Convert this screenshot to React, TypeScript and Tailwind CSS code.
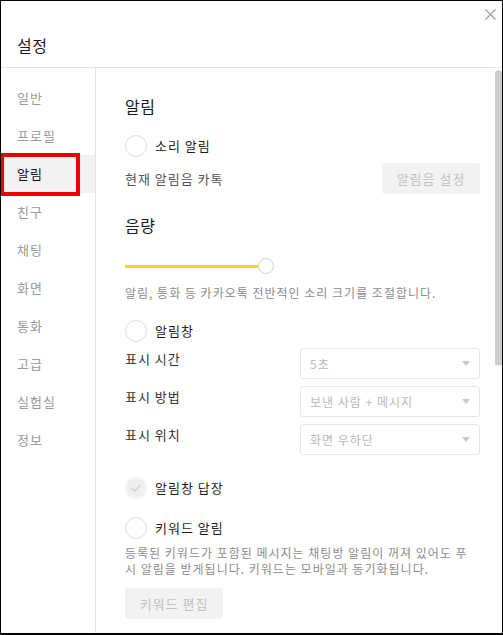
import React from "react";

const menu = ["일반", "프로필", "알림", "친구", "채팅", "화면", "통화", "고급", "실험실", "정보"];

const Radio: React.FC<{ label: string; checked?: boolean }> = ({ label, checked }) => (
  <div className="flex items-center h-[22px] gap-[8px]">
    {checked ? (
      <div className="w-[22px] h-[22px] rounded-full bg-[#efefef] flex items-center justify-center">
        <svg width="12" height="10" viewBox="0 0 12 10" fill="none">
          <path d="M1.5 5.2 L4.6 8.2 L10.5 1.8" stroke="#cfcfcf" strokeWidth="1.4" />
        </svg>
      </div>
    ) : (
      <div className="w-[22px] h-[22px] rounded-full border border-[#dcdcdc] bg-white" />
    )}
    <span className="text-[13px] leading-[16px] tracking-[1px] text-[#1e1e1e]">{label}</span>
  </div>
);

const Select: React.FC<{ label: string; value: string }> = ({ label, value }) => (
  <div className="flex items-start justify-between">
    <span className="pt-[3px] text-[13px] leading-[16px] tracking-[1px] text-[#333]">{label}</span>
    <div className="w-[180px] h-[31px] rounded-[3px] border border-[#e6e6e6] flex items-center justify-between pl-[9px] pr-[9px]">
      <span className="text-[12px] leading-[16px] tracking-[1px] text-[#b8b8b8]">{value}</span>
      <svg width="8" height="5" viewBox="0 0 8 5">
        <path d="M0 0 H8 L4 5 Z" fill="#c9c9c9" />
      </svg>
    </div>
  </div>
);

const App: React.FC = () => {
  return (
    <div
      className="w-[503px] h-[635px] bg-white border border-black border-b-2 flex flex-col overflow-hidden relative"
      style={{ fontFamily: '"Noto Sans CJK KR", "Noto Sans", sans-serif' }}
    >
      {/* Header */}
      <div className="h-[67px] shrink-0 border-b border-[#e4e4e4] relative">
        <div className="absolute left-[16px] top-[34px] text-[16px] leading-[20px] tracking-[0.5px] text-[#1a1a1a]">설정</div>
        <svg className="absolute right-[6px] top-[8px]" width="11" height="11" viewBox="0 0 11 11">
          <path d="M0.5 0.5 L10.5 10.5 M10.5 0.5 L0.5 10.5" stroke="#9a9a9a" strokeWidth="1.1" />
        </svg>
      </div>

      <div className="flex flex-1 min-h-0">
        {/* Sidebar */}
        <div className="w-[95px] shrink-0 border-r border-[#e3e3e3] pt-[11px]">
          {menu.map((m) => {
            const active = m === "알림";
            return (
              <div
                key={m}
                className={`relative h-[38px] flex items-center pl-[16px] text-[13px] tracking-[1px] ${
                  active ? "bg-[#f2f2f2] text-[#111]" : "text-[#9a9a9a]"
                }`}
              >
                {m}
                {active && (
                  <div className="absolute -left-[1px] -top-[2px] w-[80px] h-[43px] border-4 border-[#f00000]" />
                )}
              </div>
            );
          })}
        </div>

        {/* Content */}
        <div className="flex-1 relative pl-[29px] pr-[22px] flex flex-col">
          <div className="mt-[26px] h-[24px] flex items-center text-[16px] tracking-[0.5px] text-[#1a1a1a]">알림</div>
          <div className="mt-[17px]">
            <Radio label="소리 알림" />
          </div>
          <div className="mt-[6px] h-[31px] flex items-center justify-between">
            <span className="text-[13px] tracking-[1px] text-[#555]">현재 알림음 카톡</span>
            <div className="w-[98px] h-[31px] rounded-[3px] bg-[#f2f2f2] flex items-center justify-center text-[13px] tracking-[1px] text-[#c2c2c2]">
              알림음 설정
            </div>
          </div>

          <div className="mt-[19px] h-[24px] flex items-center text-[16px] tracking-[0.5px] text-[#1a1a1a]">음량</div>
          <div className="mt-[21px] h-[16px] relative w-[150px]">
            <div className="absolute left-0 top-[7px] w-[135px] h-[3px] bg-[#f4d436]" />
            <div className="absolute left-[133px] top-0 w-[16px] h-[16px] rounded-full bg-white border border-[#cfcfcf]" />
          </div>
          <div className="mt-[11px] h-[16px] flex items-center text-[12px] tracking-[1px] text-[#8c8c8c] whitespace-nowrap">
            알림, 통화 등 카카오톡 전반적인 소리 크기를 조절합니다.
          </div>

          <div className="mt-[19px]">
            <Radio label="알림창" />
          </div>
          <div className="mt-[6px] flex flex-col gap-[7px]">
            <Select label="표시 시간" value="5초" />
            <Select label="표시 방법" value="보낸 사람 + 메시지" />
            <Select label="표시 위치" value="화면 우하단" />
          </div>

          <div className="mt-[22px]">
            <Radio label="알림창 답장" checked />
          </div>
          <div className="mt-[18px]">
            <Radio label="키워드 알림" />
          </div>
          <div className="mt-[6px] text-[12px] leading-[16px] tracking-[1px] text-[#8c8c8c] whitespace-nowrap">
            등록된 키워드가 포함된 메시지는 채팅방 알림이 꺼져 있어도 푸
            <br />
            시 알림을 받게됩니다. 키워드는 모바일과 동기화됩니다.
          </div>
          <div className="mt-[11px] w-[98px] h-[31px] rounded-[3px] bg-[#f2f2f2] flex items-center justify-center text-[13px] tracking-[1px] text-[#c2c2c2]">
            키워드 편집
          </div>

          {/* Scrollbar */}
          <div className="absolute right-0 top-[2px] w-[7px] h-[295px] rounded-t-full rounded-b-[3px] bg-[#cdcdcd]" />
        </div>
      </div>
    </div>
  );
};

export default App;
